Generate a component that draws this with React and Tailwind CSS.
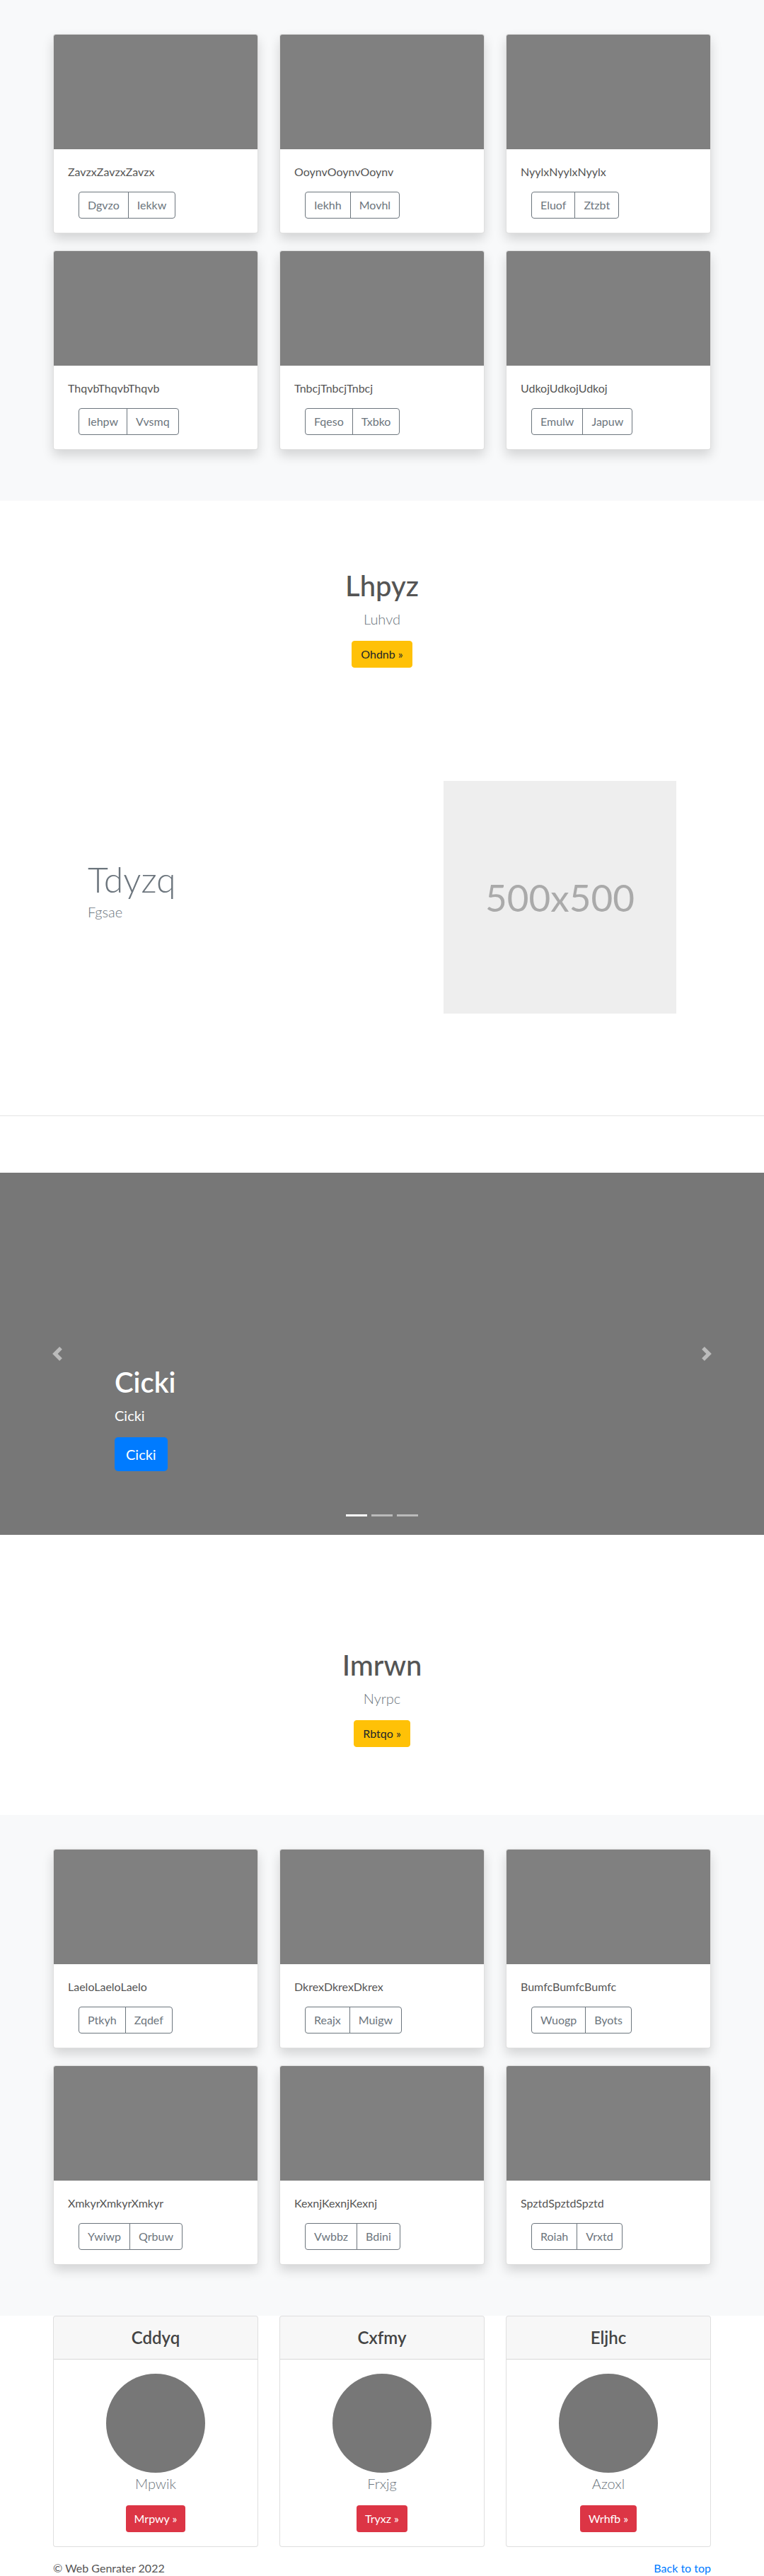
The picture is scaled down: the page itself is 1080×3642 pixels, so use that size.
import React from "react";

const album1 = [
  ["ZavzxZavzxZavzx", "Dgvzo", "Iekkw"],
  ["OoynvOoynvOoynv", "Iekhh", "Movhl"],
  ["NyylxNyylxNyylx", "Eluof", "Ztzbt"],
  ["ThqvbThqvbThqvb", "Iehpw", "Vvsmq"],
  ["TnbcjTnbcjTnbcj", "Fqeso", "Txbko"],
  ["UdkojUdkojUdkoj", "Emulw", "Japuw"],
];

const album2 = [
  ["LaeloLaeloLaelo", "Ptkyh", "Zqdef"],
  ["DkrexDkrexDkrex", "Reajx", "Muigw"],
  ["BumfcBumfcBumfc", "Wuogp", "Byots"],
  ["XmkyrXmkyrXmkyr", "Ywiwp", "Qrbuw"],
  ["KexnjKexnjKexnj", "Vwbbz", "Bdini"],
  ["SpztdSpztdSpztd", "Roiah", "Vrxtd"],
];

const pricing = [
  ["Cddyq", "Mpwik", "Mrpwy"],
  ["Cxfmy", "Frxjg", "Tryxz"],
  ["Eljhc", "Azoxl", "Wrhfb"],
];

function AlbumCard({ title, a, b }) {
  return (
    <div className="flex h-[282px] flex-col overflow-hidden rounded-[4px] border border-[rgba(0,0,0,0.125)] bg-white shadow-[0_8px_16px_rgba(0,0,0,0.15)]">
      <div className="h-[162px] w-full bg-[#808080]" />
      <div className="p-5">
        <p className="mb-4 h-6 text-[16px] leading-6 text-[#555]">{title}</p>
        <div className="ml-[15px] flex">
          <button className="h-[38px] rounded-l-[4px] border border-[#6c757d] px-3 text-[16px] leading-6 text-[#6c757d]">
            {a}
          </button>
          <button className="-ml-px h-[38px] rounded-r-[4px] border border-[#6c757d] px-3 text-[16px] leading-6 text-[#6c757d]">
            {b}
          </button>
        </div>
      </div>
    </div>
  );
}

function Album({ items }) {
  return (
    <section className="bg-[#f8f9fa] pt-12 pb-[72px]">
      <div className="mx-auto grid w-[930px] grid-cols-3 gap-x-[30px] gap-y-6">
        {items.map(([t, a, b]) => (
          <AlbumCard key={t} title={t} a={a} b={b} />
        ))}
      </div>
    </section>
  );
}

function Jumbo({ title, lead, btn }) {
  return (
    <section className="flex flex-col items-center bg-white pt-24 pb-24 text-center">
      <h1 className="mb-2 h-12 text-[40px] font-medium leading-[48px] text-[#555]">{title}</h1>
      <p className="mb-4 h-[30px] text-[20px] font-light leading-[30px] text-[#6c757d]">{lead}</p>
      <button className="h-[38px] rounded-[4px] border border-[#ffc107] bg-[#ffc107] px-3 text-[16px] leading-6 text-[#212529]">
        {btn} &raquo;
      </button>
    </section>
  );
}

function Chevron({ dir }) {
  return (
    <svg width="20" height="20" viewBox="0 0 8 8" className="opacity-50">
      {dir === "left" ? (
        <path fill="#fff" d="M5.25 0l-4 4 4 4 1.5-1.5L4.25 4l2.5-2.5L5.25 0z" />
      ) : (
        <path fill="#fff" d="M2.75 0l-1.5 1.5L3.75 4l-2.5 2.5L2.75 8l4-4-4-4z" />
      )}
    </svg>
  );
}

export default function App() {
  return (
    <div className="min-h-[3642px] bg-white font-['Lato','Liberation_Sans',sans-serif] text-[#212529]">
      <Album items={album1} />

      <Jumbo title="Lhpyz" lead="Luhvd" btn="Ohdnb" />

      <div className="py-16">
        <div className="mx-auto flex w-[930px] items-center px-[49px]">
          <div className="flex-1 pb-[22px]">
            <h2 className="text-[50px] font-light leading-[62px] text-[#6c757d]">Tdyzq</h2>
            <p className="text-[20px] font-light leading-[30px] text-[#6c757d]">Fgsae</p>
          </div>
          <div className="flex h-[329px] w-[329px] items-center justify-center bg-[#eee]">
            <span className="text-[53px] leading-none text-[#aaa]">500x500</span>
          </div>
        </div>
      </div>

      <div className="py-20">
        <hr className="border-0 border-t border-[rgba(0,0,0,0.1)]" />
      </div>

      <section className="relative h-[512px] bg-[#777]">
        <div className="absolute left-0 top-0 flex h-full w-[15%] items-center justify-center">
          <Chevron dir="left" />
        </div>
        <div className="absolute right-0 top-0 flex h-full w-[15%] items-center justify-center">
          <Chevron dir="right" />
        </div>
        <div className="absolute left-[162px] top-[272px] text-white">
          <h1 className="mb-2 h-12 text-[40px] font-semibold leading-[48px]">Cicki</h1>
          <p className="mb-4 h-[30px] text-[20px] leading-[30px]">Cicki</p>
          <button className="h-12 rounded-[5px] bg-[#007bff] px-4 text-[20px] leading-[30px] text-white">
            Cicki
          </button>
        </div>
        <div className="absolute bottom-[26px] left-0 flex w-full justify-center gap-[6px]">
          <span className="h-[3px] w-[30px] bg-white" />
          <span className="h-[3px] w-[30px] bg-white opacity-50" />
          <span className="h-[3px] w-[30px] bg-white opacity-50" />
        </div>
      </section>

      <div className="h-16" />

      <Jumbo title="Imrwn" lead="Nyrpc" btn="Rbtqo" />

      <Album items={album2} />

      <div className="mx-auto grid w-[930px] grid-cols-3 gap-x-[30px]">
        {pricing.map(([h, n, b]) => (
          <div key={h} className="flex flex-col overflow-hidden rounded-[4px] border border-[rgba(0,0,0,0.125)] bg-white">
            <div className="flex h-[61px] items-center justify-center border-b border-[rgba(0,0,0,0.125)] bg-[rgba(0,0,0,0.03)]">
              <h4 className="text-[24px] font-semibold leading-9 text-[#444]">{h}</h4>
            </div>
            <div className="flex flex-col items-center p-5">
              <div className="h-[140px] w-[140px] rounded-full bg-[#777]" />
              <p className="mb-4 h-[30px] text-[20px] font-light leading-[30px] text-[#6c757d]">{n}</p>
              <button className="h-[38px] rounded-[4px] bg-[#dc3545] px-3 text-[16px] leading-6 text-white">
                {b} &raquo;
              </button>
            </div>
          </div>
        ))}
      </div>

      <footer className="mx-auto flex w-[930px] justify-between pt-[18px] text-[16px] leading-6">
        <p className="text-[#555]">&copy; Web Genrater 2022</p>
        <a href="#" className="text-[#007bff]">Back to top</a>
      </footer>
    </div>
  );
}
